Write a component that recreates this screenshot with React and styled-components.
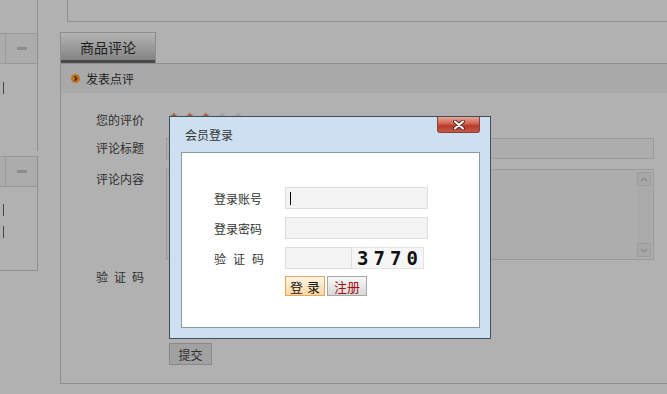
import React from "react";
import styled, { createGlobalStyle } from "styled-components";

const GlobalStyle = createGlobalStyle`
  html, body {
    margin: 0;
    padding: 0;
    background: #b1b1b1;
    overflow: hidden;
  }
  body {
    font-family: "Noto Sans CJK SC", "Liberation Sans", sans-serif;
    font-size: 12px;
    color: #2b2b2b;
  }
`;

const Page = styled.div`
  position: relative;
  display: flex;
  width: 667px;
  height: 394px;
  background: #b1b1b1;
  overflow: hidden;
`;

// Left sidebar
const Sidebar = styled.aside`
  width: 38px;
  flex-shrink: 0;
  margin-right: 22px;
  display: flex;
  flex-direction: column;
`;

const SideBlock = styled.div`
  height: ${(p) => p.$height}px;
  margin-top: ${(p) => p.$gap || 0}px;
  padding-top: ${(p) => p.$pad || 0}px;
  box-sizing: border-box;
  border-right: 1px solid #8f8f8f;
  border-bottom: ${(p) => (p.$closed ? "1px solid #8f8f8f" : "none")};
`;

const SideHead = styled.div`
  height: 29px;
  border-top: 1px solid #979797;
  border-bottom: 1px solid #979797;
  display: grid;
  grid-template-columns: 6px 1fr;
  background: #acacac;
`;

const SideHeadCell = styled.div`
  border-right: ${(p) => (p.$divider ? "1px solid #9a9a9a" : "none")};
  display: flex;
  align-items: center;
  justify-content: center;
`;

const Dash = styled.span`
  width: 10px;
  height: 3px;
  background: #8b8b8b;
`;

const SideList = styled.div`
  display: flex;
  flex-direction: column;
  gap: 10px;
  padding: ${(p) => p.$top}px 0 0 3px;
`;

const Tick = styled.span`
  width: 1px;
  height: 12px;
  background: #444;
`;

// Main column
const Main = styled.main`
  flex: 1;
  display: flex;
  flex-direction: column;
`;

const TopBox = styled.div`
  height: 21px;
  margin-left: 7px;
  border-left: 1px solid #8f8f8f;
  border-bottom: 1px solid #8f8f8f;
`;

const Tab = styled.div`
  margin-top: 10px;
  width: 96px;
  height: 31px;
  box-sizing: border-box;
  border: 1px solid #8c8c8c;
  border-bottom: none;
  background: linear-gradient(#b4b4b4, #7e7e7e);
  display: flex;
  flex-direction: column;
`;

const TabLabel = styled.div`
  flex: 1;
  display: flex;
  align-items: center;
  justify-content: center;
  font-size: 14px;
  color: #1e1e1e;
  padding-top: 1px;
`;

const TabBar = styled.div`
  height: 3px;
  background: #494949;
`;

const Panel = styled.section`
  height: 321px;
  box-sizing: border-box;
  border-top: 1px solid #8f8f8f;
  border-left: 1px solid #8f8f8f;
  border-bottom: 1px solid #8f8f8f;
`;

const SectionBar = styled.div`
  height: 29px;
  background: #a9a9a9;
  display: flex;
  align-items: center;
  gap: 6px;
  padding-left: 10px;
  color: #222;
`;

const Form = styled.div`
  padding-left: 35px;
  display: flex;
  flex-direction: column;
`;

const Row = styled.div`
  display: grid;
  grid-template-columns: 70px 1fr;
  align-items: ${(p) => (p.$top ? "start" : "center")};
  margin-top: ${(p) => p.$mt}px;
  height: ${(p) => p.$h}px;
`;

const Label = styled.span`
  color: #2e2e2e;
  letter-spacing: ${(p) => (p.$spaced ? "6px" : "0")};
  padding-top: ${(p) => (p.$top ? "1px" : "0")};
`;

const Stars = styled.div`
  display: flex;
  gap: 8px;
  padding-left: 4px;
  margin-top: -8px;
`;

const Star = styled.span`
  font-size: 8px;
  line-height: 8px;
  color: ${(p) => (p.$on ? "#a8582a" : "#9c9c9c")};
`;

const TextInput = styled.div`
  width: 488px;
  height: 21px;
  box-sizing: border-box;
  border: 1px solid #9a9a9a;
  background: #adadad;
`;

const TextArea = styled.div`
  width: 488px;
  height: 91px;
  box-sizing: border-box;
  border: 1px solid #9a9a9a;
  background: #adadad;
  display: flex;
  justify-content: flex-end;
  padding: 2px;
`;

const ScrollTrack = styled.div`
  width: 14px;
  display: flex;
  flex-direction: column;
  justify-content: space-between;
  background: #aaaaaa;
`;

const ScrollBtn = styled.div`
  height: 14px;
  box-sizing: border-box;
  border: 1px solid #9d9d9d;
  background: #a7a7a7;
  display: flex;
  align-items: center;
  justify-content: center;
`;

const SubmitButton = styled.div`
  margin: 57px 0 0 73px;
  width: 43px;
  height: 22px;
  box-sizing: border-box;
  border: 1px solid #8a8a8a;
  background: #a1a1a1;
  display: flex;
  align-items: center;
  justify-content: center;
  color: #2e2e2e;
`;

// Login dialog (floats over the page)
const Dialog = styled.div`
  position: absolute;
  left: 169px;
  top: 116px;
  width: 322px;
  height: 223px;
  box-sizing: border-box;
  border: 1px solid #3f4f5c;
  background: #cddff0;
  padding: 0 10px 10px 11px;
  display: flex;
  flex-direction: column;
`;

const DialogTitle = styled.div`
  height: 35px;
  display: flex;
  align-items: center;
  padding-left: 4px;
  color: #333;
`;

const CloseButton = styled.div`
  position: absolute;
  top: 0;
  right: 10px;
  width: 43px;
  height: 16px;
  box-sizing: border-box;
  border: 1px solid #86423a;
  border-top: none;
  border-radius: 0 0 3px 3px;
  background: linear-gradient(#e6a597 0%, #d46a58 40%, #b63a28 60%, #c65a48 100%);
  display: flex;
  align-items: center;
  justify-content: center;
`;

const DialogBody = styled.div`
  flex: 1;
  box-sizing: border-box;
  border: 1px solid #8c9aa6;
  background: #fff;
  padding: 34px 0 0 32px;
  display: flex;
  flex-direction: column;
  gap: 8px;
`;

const FieldRow = styled.div`
  display: grid;
  grid-template-columns: 71px auto;
  align-items: center;
  height: 22px;
`;

const FieldLabel = styled.span`
  color: #333;
  letter-spacing: ${(p) => (p.$spaced ? "7px" : "0")};
`;

const Field = styled.div`
  width: ${(p) => p.$w}px;
  height: 22px;
  box-sizing: border-box;
  border: 1px solid #dedede;
  background: #f3f3f3;
  display: flex;
  align-items: center;
  padding-left: 4px;
`;

const Caret = styled.span`
  width: 1px;
  height: 13px;
  background: #000;
`;

const CaptchaGroup = styled.div`
  display: flex;
`;

const Captcha = styled.div`
  width: 72px;
  height: 22px;
  box-sizing: border-box;
  border: 1px solid #e2e2e2;
  border-left: none;
  background: #f6f6f6;
  display: flex;
  align-items: center;
  justify-content: center;
  font-family: "DejaVu Sans Mono", "Liberation Mono", monospace;
  font-weight: bold;
  font-size: 19px;
  letter-spacing: 5px;
  padding-left: 5px;
  color: #111;
`;

const Buttons = styled.div`
  display: flex;
  gap: 2px;
  margin-left: 71px;
  margin-top: -1px;
`;

const DialogButton = styled.div`
  width: 40px;
  height: 20px;
  box-sizing: border-box;
  border: 1px solid ${(p) => (p.$primary ? "#e4a864" : "#a8a8a8")};
  background: ${(p) =>
    p.$primary
      ? "linear-gradient(#fff6e6, #ffd7a2)"
      : "linear-gradient(#f8f8f8, #d9d9d9)"};
  color: ${(p) => (p.$primary ? "#111" : "#a01212")};
  font-size: 13px;
  letter-spacing: ${(p) => (p.$primary ? "4px" : "0")};
  padding-left: ${(p) => (p.$primary ? "4px" : "0")};
  display: flex;
  align-items: center;
  justify-content: center;
`;

function ArrowIcon() {
  return (
    <svg width="9" height="9" viewBox="0 0 9 9">
      <circle cx="4.5" cy="4.5" r="4.5" fill="#c2731f" />
      <path d="M3.5 2.3 L5.7 4.5 L3.5 6.7" stroke="#3a2a1a" strokeWidth="1.5" fill="none" />
    </svg>
  );
}

function Chevron({ down }) {
  return (
    <svg width="8" height="5" viewBox="0 0 8 5">
      <path
        d={down ? "M1 1 L4 4 L7 1" : "M1 4 L4 1 L7 4"}
        stroke="#8a8a8a"
        strokeWidth="1.2"
        fill="none"
      />
    </svg>
  );
}

function CloseIcon() {
  return (
    <svg width="12" height="10" viewBox="0 0 12 10">
      <path d="M2 1.5 L10 8.5 M10 1.5 L2 8.5" stroke="#5a2a24" strokeWidth="4" strokeLinecap="round" />
      <path d="M2 1.5 L10 8.5 M10 1.5 L2 8.5" stroke="#fff" strokeWidth="2" strokeLinecap="round" />
    </svg>
  );
}

export default function App() {
  return (
    <>
      <GlobalStyle />
      <Page>
        <Sidebar>
          <SideBlock $height={151} $pad={33}>
            <SideHead>
              <SideHeadCell $divider />
              <SideHeadCell>
                <Dash />
              </SideHeadCell>
            </SideHead>
            <SideList $top={18}>
              <Tick />
            </SideList>
          </SideBlock>
          <SideBlock $height={115} $gap={5} $closed>
            <SideHead>
              <SideHeadCell $divider />
              <SideHeadCell>
                <Dash />
              </SideHeadCell>
            </SideHead>
            <SideList $top={17}>
              <Tick />
              <Tick />
            </SideList>
          </SideBlock>
        </Sidebar>

        <Main>
          <TopBox />
          <Tab>
            <TabLabel>商品评论</TabLabel>
            <TabBar />
          </Tab>
          <Panel>
            <SectionBar>
              <ArrowIcon />
              <span>发表点评</span>
            </SectionBar>
            <Form>
              <Row $mt={16} $h={20}>
                <Label>您的评价</Label>
                <Stars>
                  {[true, true, true, false, false].map((on, i) => (
                    <Star key={i} $on={on}>
                      ★
                    </Star>
                  ))}
                </Stars>
              </Row>
              <Row $mt={9} $h={21} $top>
                <Label $top>评论标题</Label>
                <TextInput />
              </Row>
              <Row $mt={10} $h={91} $top>
                <Label $top>评论内容</Label>
                <TextArea>
                  <ScrollTrack>
                    <ScrollBtn>
                      <Chevron />
                    </ScrollBtn>
                    <ScrollBtn>
                      <Chevron down />
                    </ScrollBtn>
                  </ScrollTrack>
                </TextArea>
              </Row>
              <Row $mt={6} $h={20}>
                <Label $spaced>验证码</Label>
                <span />
              </Row>
              <SubmitButton>提交</SubmitButton>
            </Form>
          </Panel>
        </Main>

        <Dialog>
          <DialogTitle>会员登录</DialogTitle>
          <CloseButton>
            <CloseIcon />
          </CloseButton>
          <DialogBody>
            <FieldRow>
              <FieldLabel>登录账号</FieldLabel>
              <Field $w={143}>
                <Caret />
              </Field>
            </FieldRow>
            <FieldRow>
              <FieldLabel>登录密码</FieldLabel>
              <Field $w={143} />
            </FieldRow>
            <FieldRow>
              <FieldLabel $spaced>验证码</FieldLabel>
              <CaptchaGroup>
                <Field $w={67} />
                <Captcha>3770</Captcha>
              </CaptchaGroup>
            </FieldRow>
            <Buttons>
              <DialogButton $primary>登录</DialogButton>
              <DialogButton>注册</DialogButton>
            </Buttons>
          </DialogBody>
        </Dialog>
      </Page>
    </>
  );
}
